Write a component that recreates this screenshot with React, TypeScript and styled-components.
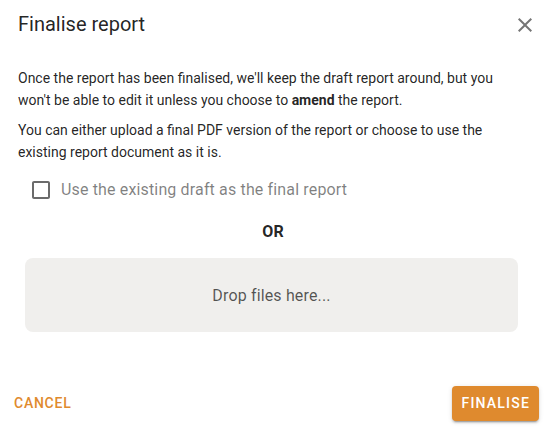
import styled, { createGlobalStyle } from 'styled-components';

const GlobalStyle = createGlobalStyle`
    html, body {
        margin: 0;
        padding: 0;
        background: #ffffff;
    }

    body {
        font-family: Roboto, "Liberation Sans", Arial, sans-serif;
        color: rgba(0, 0, 0, 0.87);
    }
`;

const ACCENT = '#df8a2e';

const DialogContainer = styled.div`
    width: 546px;
    height: 429px;
    display: flex;
    flex-direction: column;
    box-sizing: border-box;
    background: #ffffff;
`;

const DialogHeader = styled.div`
    display: flex;
    align-items: center;
    justify-content: space-between;
    padding: 8px 9px 0 18px;
`;

const DialogTitle = styled.h2`
    margin: 0;
    font-size: 20px;
    font-weight: 400;
    line-height: 32px;
    color: rgba(0, 0, 0, 0.87);
`;

const CloseButton = styled.button`
    display: flex;
    align-items: center;
    justify-content: center;
    padding: 0;
    width: 24px;
    height: 24px;
    margin-top: 1px;
    border: none;
    background: transparent;
    color: rgba(0, 0, 0, 0.54);
    cursor: pointer;
`;

const DialogContent = styled.div`
    display: flex;
    flex-direction: column;
    padding: 27px 18px 0 18px;
    flex: 1;
`;

const Paragraph = styled.p`
    margin: 0 0 8px 0;
    font-size: 14px;
    line-height: 22px;
    color: rgba(0, 0, 0, 0.87);
`;

const Emphasis = styled.b`
    font-weight: 700;
`;

const CheckboxRow = styled.label`
    display: flex;
    align-items: center;
    gap: 8px;
    height: 42px;
    margin: -2px 0 0 11px;
    cursor: pointer;
`;

const CheckboxBox = styled.span`
    display: flex;
    width: 24px;
    height: 24px;
    color: rgba(0, 0, 0, 0.58);
`;

const CheckboxLabel = styled.span`
    font-size: 16px;
    line-height: 24px;
    letter-spacing: 0.15px;
    color: rgba(0, 0, 0, 0.5);
`;

const OrDivider = styled.div`
    margin-top: 9px;
    text-align: center;
    font-size: 16px;
    font-weight: 700;
    line-height: 24px;
    letter-spacing: 0.15px;
    color: rgba(0, 0, 0, 0.87);
`;

const DropZone = styled.div`
    display: flex;
    align-items: center;
    justify-content: center;
    height: 74px;
    margin: 14px 10px 0 7px;
    border-radius: 8px;
    background: #f0efed;
    font-size: 16px;
    letter-spacing: 0.15px;
    color: rgba(0, 0, 0, 0.66);
`;

const DialogActions = styled.div`
    display: flex;
    align-items: center;
    justify-content: space-between;
    padding: 0 7px 8px 6px;
`;

const TextButton = styled.button`
    padding: 6px 8px;
    border: none;
    background: transparent;
    font-family: inherit;
    font-size: 14px;
    font-weight: 500;
    line-height: 23px;
    letter-spacing: 0.75px;
    text-transform: uppercase;
    color: ${ACCENT};
    cursor: pointer;
`;

const ContainedButton = styled(TextButton)`
    height: 35px;
    padding: 0 9px;
    border-radius: 4px;
    letter-spacing: 1.2px;
    background: ${ACCENT};
    color: #ffffff;
    box-shadow: 0px 3px 1px -2px rgba(0, 0, 0, 0.2), 0px 2px 2px 0px rgba(0, 0, 0, 0.14), 0px 1px 5px 0px rgba(0, 0, 0, 0.12);
`;

const CloseIcon = () => (
    <svg width="24" height="24" viewBox="0 0 24 24" fill="currentColor">
        <path d="M19 6.41 17.59 5 12 10.59 6.41 5 5 6.41 10.59 12 5 17.59 6.41 19 12 13.41 17.59 19 19 17.59 13.41 12z" />
    </svg>
);

const CheckboxIcon = () => (
    <svg width="24" height="24" viewBox="0 0 24 24" fill="currentColor">
        <path d="M19 5v14H5V5h14m0-2H5c-1.1 0-2 .9-2 2v14c0 1.1.9 2 2 2h14c1.1 0 2-.9 2-2V5c0-1.1-.9-2-2-2z" />
    </svg>
);

const App = () => {
    return (
        <DialogContainer>
            <GlobalStyle />
            <DialogHeader>
                <DialogTitle>Finalise report</DialogTitle>
                <CloseButton aria-label="close">
                    <CloseIcon />
                </CloseButton>
            </DialogHeader>
            <DialogContent>
                <Paragraph>
                    Once the report has been finalised, we'll keep the draft report around, but you
                    won't be able to edit it unless you choose to <Emphasis>amend</Emphasis> the report.
                </Paragraph>
                <Paragraph>
                    You can either upload a final PDF version of the report or choose to use the
                    existing report document as it is.
                </Paragraph>
                <CheckboxRow>
                    <CheckboxBox>
                        <CheckboxIcon />
                    </CheckboxBox>
                    <CheckboxLabel>Use the existing draft as the final report</CheckboxLabel>
                </CheckboxRow>
                <OrDivider>OR</OrDivider>
                <DropZone>Drop files here...</DropZone>
            </DialogContent>
            <DialogActions>
                <TextButton>Cancel</TextButton>
                <ContainedButton>Finalise</ContainedButton>
            </DialogActions>
        </DialogContainer>
    );
};

export default App;
